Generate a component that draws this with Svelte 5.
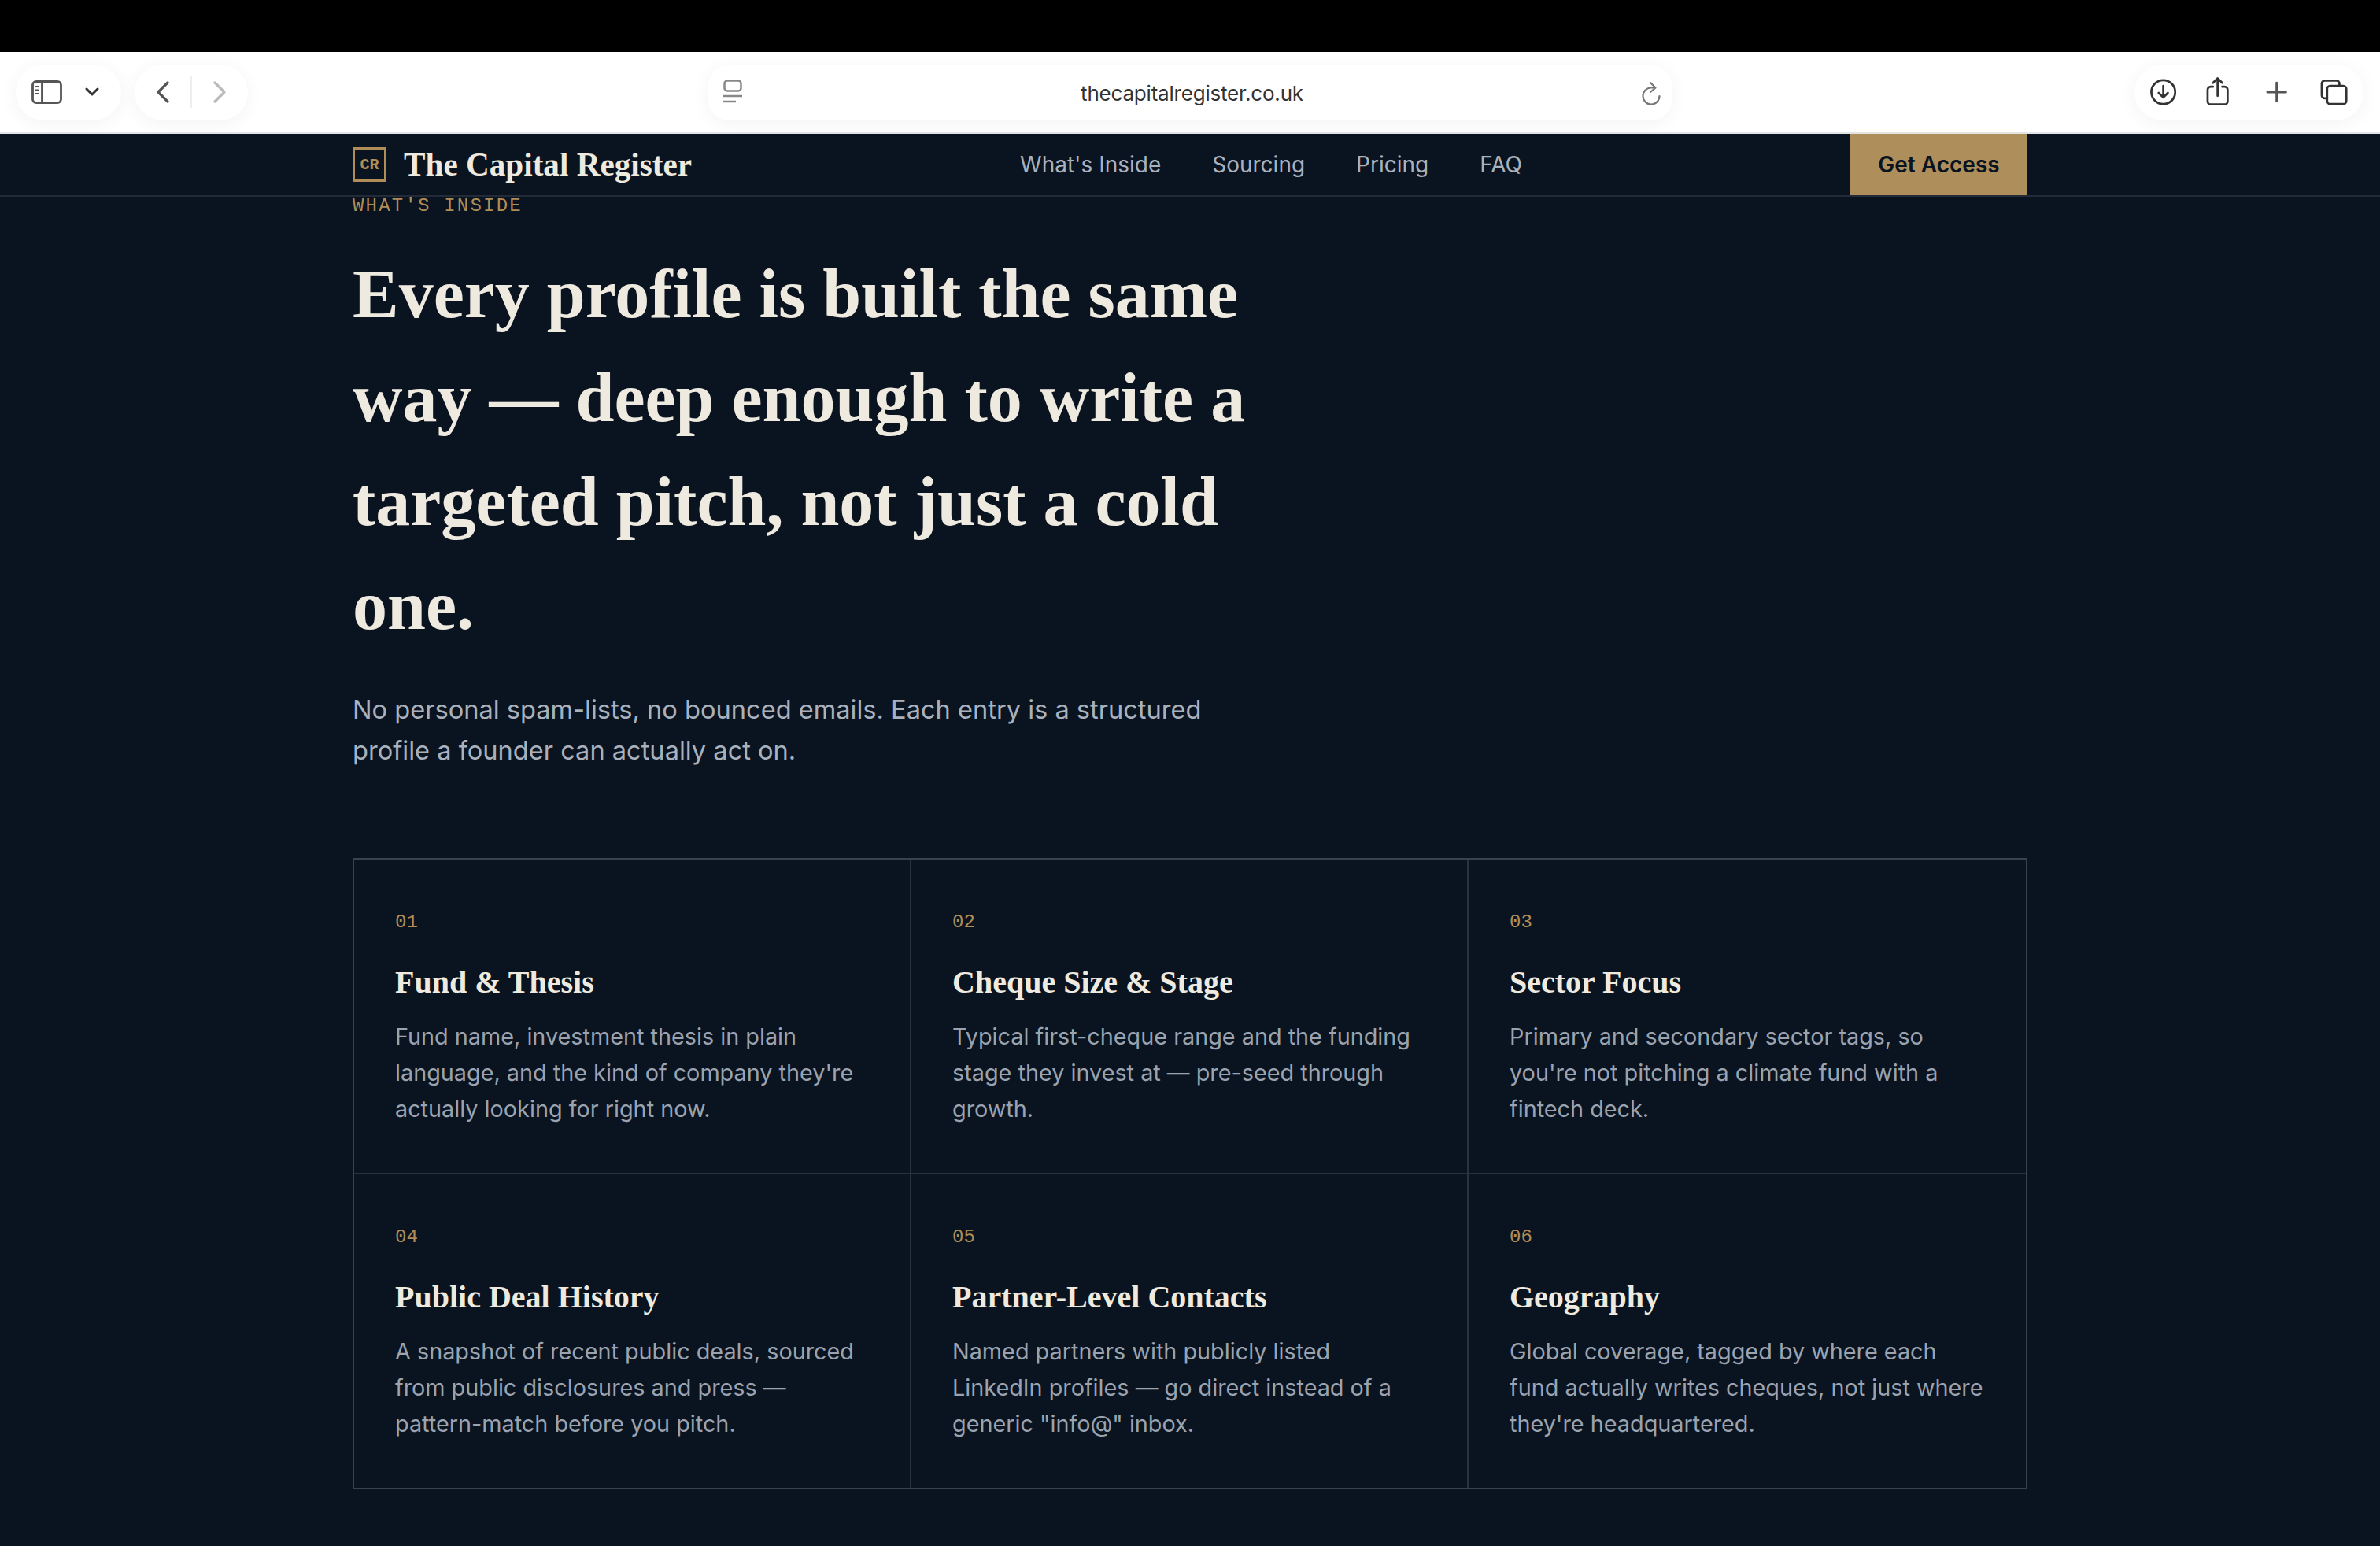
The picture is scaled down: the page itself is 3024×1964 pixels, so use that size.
<script>
  const links = ["What's Inside", 'Sourcing', 'Pricing', 'FAQ'];

  const cards = [
    { num: '01', title: 'Fund & Thesis', text: "Fund name, investment thesis in plain language, and the kind of company they're actually looking for right now." },
    { num: '02', title: 'Cheque Size & Stage', text: 'Typical first-cheque range and the funding stage they invest at — pre-seed through growth.' },
    { num: '03', title: 'Sector Focus', text: "Primary and secondary sector tags, so you're not pitching a climate fund with a fintech deck." },
    { num: '04', title: 'Public Deal History', text: 'A snapshot of recent public deals, sourced from public disclosures and press — pattern-match before you pitch.' },
    { num: '05', title: 'Partner-Level Contacts', text: 'Named partners with publicly listed LinkedIn profiles — go direct instead of a generic "info@" inbox.' },
    { num: '06', title: 'Geography', text: "Global coverage, tagged by where each fund actually writes cheques, not just where they're headquartered." }
  ];
</script>

<div class="page">
  <div class="topbar"></div>

  <div class="toolbar">
    <div class="tool-left">
      <div class="pill side">
        <svg width="39" height="30" viewBox="0 0 39 30" fill="none" stroke="#555" stroke-width="2.800">
          <rect x="1.500" y="1.500" width="36" height="27" rx="4.500" />
          <path d="M13.500 1.500v27" />
          <path d="M5 8h5M5 12.500h5M5 17h5" stroke-width="2" />
        </svg>
        <svg width="18" height="12" viewBox="0 0 18 12" fill="none" stroke="#333" stroke-width="3" stroke-linecap="round" stroke-linejoin="round">
          <path d="M2 2l7 7 7-7" />
        </svg>
      </div>
      <div class="pill nav-btns">
        <svg width="16" height="28" viewBox="0 0 16 28" fill="none" stroke="#555" stroke-width="3.200" stroke-linecap="round" stroke-linejoin="round">
          <path d="M14 2L2 14l12 12" />
        </svg>
        <span class="divider"></span>
        <svg width="16" height="28" viewBox="0 0 16 28" fill="none" stroke="#bbb" stroke-width="3.200" stroke-linecap="round" stroke-linejoin="round">
          <path d="M2 2l12 12L2 26" />
        </svg>
      </div>
    </div>

    <div class="address">
      <svg width="24" height="34" viewBox="0 0 24 34" fill="none" stroke="#888" stroke-width="2.500">
        <rect x="1.500" y="1.500" width="21" height="13" rx="3.500" />
        <path d="M0 21h24M0 28h16" />
      </svg>
      <span class="url">thecapitalregister.co.uk</span>
      <svg width="24" height="32" viewBox="0 0 24 32" fill="none" stroke="#777" stroke-width="2.200" stroke-linecap="round" stroke-linejoin="round">
        <path d="M22.500 20a10.500 10.500 0 1 1-11-10.500h5" />
        <path d="M11 3l6.500 6.500L11 15" />
      </svg>
    </div>

    <div class="pill tool-right">
      <svg width="34" height="34" viewBox="0 0 34 34" fill="none" stroke="#333" stroke-width="2.800" stroke-linecap="round" stroke-linejoin="round">
        <circle cx="17" cy="17" r="15.500" />
        <path d="M17 9v15M11 18l6 6 6-6" />
      </svg>
      <svg class="share" width="30" height="38" viewBox="0 0 30 38" fill="none" stroke="#333" stroke-width="2.800" stroke-linecap="round" stroke-linejoin="round">
        <path d="M9 13H6a4 4 0 0 0-4 4v15a4 4 0 0 0 4 4h18a4 4 0 0 0 4-4V17a4 4 0 0 0-4-4h-3" />
        <path d="M15 25V3M9 8l6-6 6 6" />
      </svg>
      <svg class="plus" width="28" height="28" viewBox="0 0 28 28" fill="none" stroke="#555" stroke-width="3" stroke-linecap="round">
        <path d="M14 2v24M2 14h24" />
      </svg>
      <svg class="tabs" width="36" height="34" viewBox="0 0 36 34" fill="none" stroke="#333" stroke-width="2.800" stroke-linejoin="round">
        <path d="M8 25H6a4 4 0 0 1-4-4V6a4 4 0 0 1 4-4h15a4 4 0 0 1 4 4v2" />
        <rect x="9" y="9" width="25" height="23.500" rx="4" />
      </svg>
    </div>
  </div>

  <header class="site-nav">
    <div class="nav-inner">
      <a class="brand" href="#top">
        <span class="mark">CR</span>
        <span class="brand-name">The Capital Register</span>
      </a>
      <nav class="links">
        {#each links as link}
          <a href="#top">{link}</a>
        {/each}
      </nav>
      <a class="cta" href="#top">Get Access</a>
    </div>
  </header>

  <main class="content">
    <p class="eyebrow">WHAT'S INSIDE</p>
    <h1>Every profile is built the same way — deep enough to write a targeted pitch, not just a cold one.</h1>
    <p class="lede">No personal spam-lists, no bounced emails. Each entry is a structured profile a founder can actually act on.</p>

    <div class="grid">
      {#each cards as card}
        <article class="card">
          <div class="num">{card.num}</div>
          <h3>{card.title}</h3>
          <p>{card.text}</p>
        </article>
      {/each}
    </div>
  </main>
</div>

<style>
  :global(body) {
    margin: 0;
    background: #0a1320;
  }

  .page {
    width: 3024px;
    height: 1964px;
    overflow: hidden;
    background: #0a1320;
    font-family: Inter, 'Liberation Sans', sans-serif;
  }

  .topbar {
    height: 66px;
    background: #000;
  }

  .toolbar {
    height: 104px;
    box-sizing: border-box;
    border-bottom: 2px solid #e4e4e6;
    background: #fff;
    display: flex;
    align-items: center;
    padding: 0 21px 0 20px;
  }

  .tool-left {
    display: flex;
    gap: 17px;
  }

  .pill {
    height: 71px;
    border-radius: 36px;
    background: #fff;
    box-shadow: 0 4px 24px rgba(0, 0, 0, 0.05);
    display: flex;
    align-items: center;
  }

  .side {
    width: 134px;
    box-sizing: border-box;
    padding: 0 28px 0 20px;
    justify-content: space-between;
  }

  .nav-btns {
    width: 144px;
    box-sizing: border-box;
    padding: 0 28px;
    justify-content: space-between;
  }

  .divider {
    width: 2px;
    height: 40px;
    background: #eee;
  }

  .address {
    width: 1224px;
    height: 70px;
    margin: 2px 0 0 585px;
    box-sizing: border-box;
    padding: 0 14px 0 19px;
    border-radius: 26px;
    background: #fff;
    box-shadow: 0 4px 24px rgba(0, 0, 0, 0.05);
    display: flex;
    align-items: center;
    justify-content: space-between;
  }

  .url {
    font-size: 26px;
    color: #333;
    letter-spacing: -0.2px;
  }

  .tool-right {
    width: 291px;
    margin-left: auto;
    box-sizing: border-box;
    padding: 0 20px;
  }

  .share {
    margin: -2px 0 0 38px;
  }

  .plus {
    margin-left: 46px;
  }

  .tabs {
    margin-left: 42px;
  }

  .site-nav {
    height: 80px;
    box-sizing: border-box;
    border-bottom: 2px solid #232b38;
  }

  .nav-inner {
    width: 2128px;
    height: 78px;
    margin: 0 auto;
    display: flex;
    align-items: center;
    justify-content: space-between;
  }

  .brand {
    display: flex;
    align-items: center;
    gap: 22px;
    text-decoration: none;
  }

  .mark {
    width: 43px;
    height: 44px;
    box-sizing: border-box;
    border: 3px solid #b08d57;
    display: flex;
    align-items: center;
    justify-content: center;
    color: #b08d57;
    font-family: 'Liberation Mono', monospace;
    font-weight: 700;
    font-size: 20px;
  }

  .brand-name {
    font-family: 'Liberation Serif', serif;
    font-weight: 700;
    font-size: 41.2px;
    color: #efeadf;
  }

  .links {
    display: flex;
    gap: 65px;
  }

  .links a {
    font-size: 28px;
    color: #a9b1bd;
    text-decoration: none;
  }

  .cta {
    width: 225px;
    height: 78px;
    background: #ae8e5b;
    color: #0a1320;
    font-size: 28px;
    font-weight: 600;
    text-decoration: none;
    display: flex;
    align-items: center;
    justify-content: center;
  }

  .content {
    width: 2128px;
    margin: 0 auto;
  }

  .eyebrow {
    margin: 0;
    font-family: 'Liberation Mono', monospace;
    font-size: 24px;
    line-height: 24px;
    letter-spacing: 2.2px;
    color: #b08d57;
  }

  h1 {
    margin: 34px 0 0;
    max-width: 1180px;
    font-family: 'Liberation Serif', serif;
    font-weight: 700;
    font-size: 88px;
    line-height: 132px;
    color: #efeadf;
  }

  .lede {
    margin: 39px 0 0;
    max-width: 1120px;
    font-size: 32.6px;
    line-height: 52px;
    color: #a9b1bd;
  }

  .grid {
    margin-top: 111px;
    display: grid;
    grid-template-columns: repeat(3, 1fr);
    border: 2px solid #3a4250;
  }

  .card {
    height: 276px;
    padding: 64px 52px 58px;
    border-right: 2px solid #2a323f;
    border-bottom: 2px solid #2a323f;
    box-sizing: content-box;
  }

  .card:nth-child(3n) {
    border-right: none;
  }

  .card:nth-child(n + 4) {
    border-bottom: none;
  }

  .num {
    font-family: 'Liberation Mono', monospace;
    font-size: 24px;
    line-height: 32px;
    color: #b08d57;
  }

  h3 {
    margin: 34px 0 0;
    font-family: 'Liberation Serif', serif;
    font-weight: 700;
    font-size: 40px;
    line-height: 52px;
    color: #efeadf;
  }

  .card p {
    margin: 20px 0 0;
    font-size: 28.8px;
    line-height: 46px;
    color: #9aa3af;
  }
</style>
